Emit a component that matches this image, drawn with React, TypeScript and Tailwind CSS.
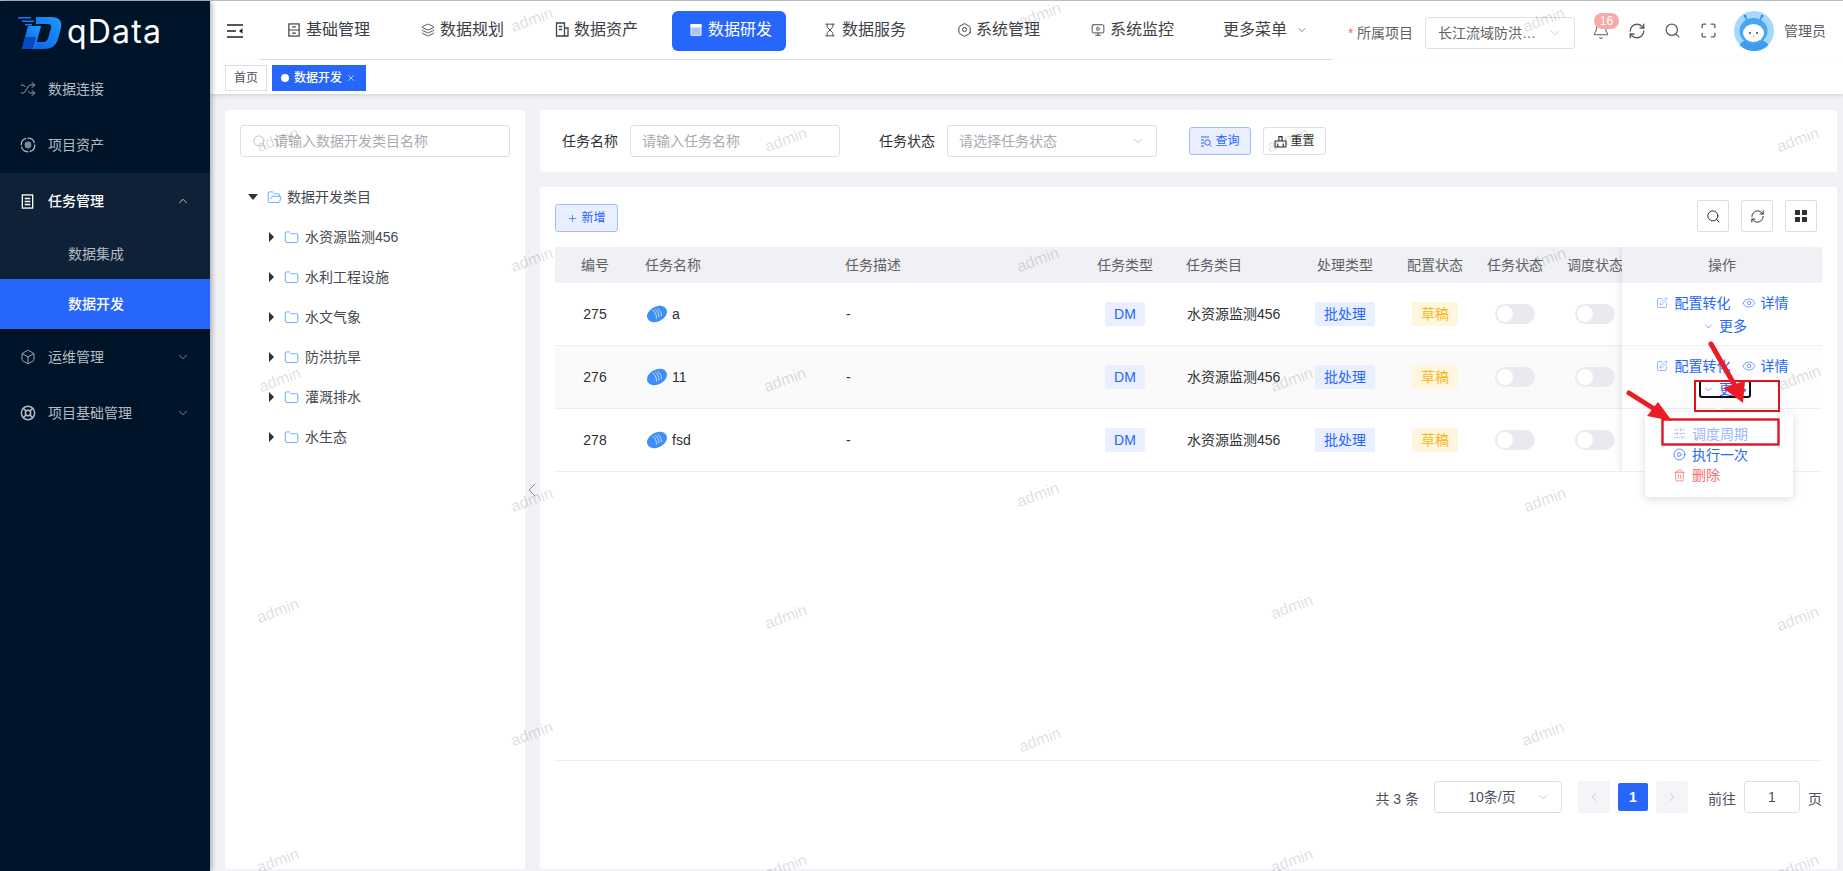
import {
  Bell,
  Box,
  ChevronDown,
  ChevronLeft,
  ChevronRight,
  ChevronUp,
  CirclePlay,
  Eye,
  Folder,
  FolderOpen,
  Hexagon,
  Hourglass,
  Layers,
  LifeBuoy,
  Maximize,
  MonitorPlay,
  Plus,
  RefreshCw,
  Search,
  Shuffle,
  SlidersHorizontal,
  SquarePen,
  Trash2,
  X,
} from 'lucide-react';
import type { ReactNode } from 'react';

const FONT = "font-['Liberation_Sans','Noto_Sans_CJK_SC',sans-serif]";

const WATERMARKS = [
  [532, 20], [1040, 15], [1544, 20],
  [278, 140], [786, 140], [1288, 140], [1798, 140],
  [532, 260], [1038, 260], [1545, 260],
  [280, 380], [785, 380], [1292, 380], [1800, 378],
  [532, 500], [1038, 495], [1545, 500],
  [278, 611], [786, 617], [1292, 607], [1798, 619],
  [532, 734], [1040, 740], [1543, 734],
  [278, 861], [786, 867], [1292, 861], [1798, 867],
];

function BaseIcon() {
  return (
    <svg className="size-[14px]" viewBox="0 0 13 15" fill="none" stroke="currentColor" strokeWidth="1.3">
      <rect x="1" y="1" width="11" height="13" />
      <path d="M1 7.5h11M4.5 4.2h4M4.5 10.8h4" />
    </svg>
  );
}

function AssetIcon() {
  return (
    <svg className="size-[15px]" viewBox="0 0 14 15" fill="none" stroke="currentColor" strokeWidth="1.3">
      <path d="M1.5 1h8v13h-8zM9.500 6H13v8H1.500M3.800 4.500h3.400M3.800 7.500h3.400" />
    </svg>
  );
}

function DevIcon() {
  return (
    <svg className="size-[14px]" viewBox="0 0 13 15" fill="none">
      <rect x="0.5" y="1" width="12" height="13" rx="1.5" fill="#fff" fillOpacity="0.8" />
      <rect x="0.5" y="1" width="12" height="3.2" rx="1" fill="#fff" />
      <rect x="2" y="5.5" width="9" height="7" fill="#2666fb" fillOpacity="0.25" />
    </svg>
  );
}

function HexIcon() {
  return (
    <span className="relative flex size-[15px] items-center justify-center">
      <Hexagon className="size-[16px]" strokeWidth={1.6} />
      <span className="absolute size-[5px] rounded-full border border-current" />
    </span>
  );
}

function MenuFoldIcon() {
  return (
    <svg className="size-[16px]" viewBox="0 0 16 14" fill="none" stroke="#222" strokeWidth="1.6">
      <path d="M0 1h16M0 7h9M0 13h16" />
      <path d="M15.500 4.200 12 7l3.500 2.800z" fill="#222" stroke="none" />
    </svg>
  );
}

function ListDocIcon() {
  return (
    <svg className="size-[15px]" viewBox="0 0 14 16" fill="none" stroke="currentColor" strokeWidth="1.4">
      <rect x="1.5" y="1" width="11" height="14" />
      <path d="M4 4.800h6M4 8h6M4 11.200h6" />
    </svg>
  );
}

function AssetRingIcon() {
  return (
    <svg className="size-[16px]" viewBox="0 0 16 16" fill="none" stroke="currentColor">
      <circle cx="8" cy="8" r="6.800" strokeWidth="1.2" strokeDasharray="9 1.5" />
      <circle cx="8" cy="8" r="3.400" fill="currentColor" fillOpacity="0.7" stroke="none" />
    </svg>
  );
}

function QueryIcon() {
  return (
    <svg className="size-[12px]" viewBox="0 0 12 12" fill="none" stroke="currentColor" strokeWidth="1">
      <path d="M1 2h8M1 5h3M1 8h3M1 11h3" />
      <circle cx="7.500" cy="7.500" r="2.700" />
      <path d="m9.500 9.500 2 2" />
    </svg>
  );
}

function Logo() {
  return (
    <svg width="45" height="34" viewBox="0 0 45 34">
      <defs>
        <linearGradient id="logoA" x1="0" y1="1" x2="1" y2="0">
          <stop offset="0" stopColor="#0b5fe8" />
          <stop offset="1" stopColor="#1e9bff" />
        </linearGradient>
      </defs>
      <path d="M1 1h13v1.500H1zM5 4.500h12V6H5zM8 8h7v1.500H8z" fill="#1677ff" />
      <path d="M19 1h15c8 0 11.500 4 10 11l-3 11c-2 7-7 10-14 10H12l3.500-7h10c3 0 5-1 6-5l2.500-9c.7-3-.5-4-3.500-4H19z" fill="url(#logoA)" />
      <path d="M11 10h13l-6 23H5z" fill="url(#logoA)" />
      <path d="M8 21h11l-3 12H5z" fill="#0b49c4" />
    </svg>
  );
}

function Avatar() {
  return (
    <svg className="size-10" viewBox="0 0 40 40">
      <defs>
        <clipPath id="avClip">
          <circle cx="20" cy="20" r="20" />
        </clipPath>
      </defs>
      <g clipPath="url(#avClip)">
        <rect width="40" height="40" fill="#a5d8ff" />
        <path d="M4 40c0-8 6-12 16-12s16 4 16 12z" fill="#3d9bf0" />
        <path d="M13 9 11 5M26 9l2-4" stroke="#2e8ae6" strokeWidth="1.5" />
        <circle cx="11" cy="5" r="1.300" fill="#2e8ae6" />
        <circle cx="28" cy="5" r="1.300" fill="#2e8ae6" />
        <ellipse cx="19.500" cy="20" rx="14" ry="13" fill="#4aa5f5" />
        <ellipse cx="19.500" cy="22" rx="10.500" ry="9" fill="#fff" />
        <circle cx="16" cy="22" r="1" fill="#345" />
        <circle cx="23" cy="22" r="1" fill="#345" />
        <path d="M19 25h1.500" stroke="#e88" strokeWidth="1" />
      </g>
    </svg>
  );
}

function TaskIcon() {
  return (
    <svg width="20" height="18" viewBox="0 0 20 18">
      <ellipse cx="10" cy="9" rx="10.500" ry="7.500" transform="rotate(-28 10 9)" fill="#3d8ef5" />
      <path d="M5.500 5c2.500 1.500 4 4 4 8.500M8 3.800c2.500 2 4 4.500 4 8.500M10.500 3c2.500 2 4 4.500 4 8" stroke="#cfe3ff" strokeWidth="0.9" fill="none" />
    </svg>
  );
}

function TopNavItem({ icon, label, active = false }: { icon: ReactNode; label: string; active?: boolean }) {
  return (
    <div
      className={`flex h-10 w-[114px] items-center gap-[5px] rounded-md pb-[3px] pl-[17px] text-base ${
        active ? 'bg-[#2666fb] text-white' : 'text-[#3d4148]'
      }`}
    >
      <span className="flex w-[14px] justify-center">{icon}</span>
      <span className="whitespace-nowrap leading-none">{label}</span>
    </div>
  );
}

function SideItem({ icon, label, chevron, open = false }: { icon: ReactNode; label: string; chevron?: 'up' | 'down'; open?: boolean }) {
  return (
    <div className={`flex h-14 items-center pl-[20px] pr-[20px] text-sm ${open ? 'font-medium text-white' : 'text-[#b4bac2]'}`}>
      <span className="flex w-[28px] items-center">{icon}</span>
      <span className="flex-1">{label}</span>
      {chevron === 'up' && <ChevronUp className="size-[14px]" strokeWidth={1.2} />}
      {chevron === 'down' && <ChevronDown className="size-[14px]" strokeWidth={1.2} />}
    </div>
  );
}

function Sidebar() {
  return (
    <aside className="z-20 flex w-[210px] shrink-0 flex-col bg-[#001429] shadow-[2px_0_5px_rgba(0,20,41,0.3)]">
      <div className="flex h-[60px] items-start pl-[17px] pt-[15px]">
        <Logo />
        <span className="-mt-px ml-[5px] font-['Inter',sans-serif] text-[32px] font-normal leading-[34px] tracking-[1.2px] text-white">qData</span>
      </div>
      <SideItem icon={<Shuffle className="size-[16px]" strokeWidth={1.3} />} label="数据连接" />
      <SideItem icon={<AssetRingIcon />} label="项目资产" />
      <div className="bg-[#0f2136]">
        <SideItem icon={<ListDocIcon />} label="任务管理" chevron="up" open />
        <div className="flex h-[50px] items-center pl-[68px] text-sm text-[#b4bac2]">数据集成</div>
        <div className="flex h-[50px] items-center bg-[#2666fb] pl-[68px] text-sm font-medium text-white">数据开发</div>
      </div>
      <SideItem icon={<Box className="size-[16px]" strokeWidth={1.3} />} label="运维管理" chevron="down" />
      <SideItem icon={<LifeBuoy className="size-[16px]" strokeWidth={2.2} />} label="项目基础管理" chevron="down" />
    </aside>
  );
}

function Header() {
  return (
    <header className="flex h-[59px] shrink-0 items-center bg-white">
      <div className="ml-[17px] flex w-[33px] items-center">
        <MenuFoldIcon />
      </div>
      <nav className="flex h-full w-[1072px] items-center gap-5 border-b border-[#e1e3ea] pl-[10px] pt-[2px]">
        <TopNavItem icon={<BaseIcon />} label="基础管理" />
        <TopNavItem icon={<Layers className="size-[16px]" strokeWidth={1.5} />} label="数据规划" />
        <TopNavItem icon={<AssetIcon />} label="数据资产" />
        <TopNavItem icon={<DevIcon />} label="数据研发" active />
        <TopNavItem icon={<Hourglass className="size-[16px]" strokeWidth={1.6} />} label="数据服务" />
        <TopNavItem icon={<HexIcon />} label="系统管理" />
        <TopNavItem icon={<MonitorPlay className="size-[16px]" strokeWidth={1.6} />} label="系统监控" />
        <div className="flex items-center gap-[9px] pb-[3px] pl-[15px] text-base whitespace-nowrap text-[#3d4148]">
          更多菜单
          <ChevronDown className="size-[12px]" strokeWidth={1.3} />
        </div>
      </nav>
      <div className="flex items-center pt-[5px] text-sm text-[#606266]">
        <span className="ml-[16px] w-[9px] text-[#f56c6c]">*</span>
        <span className="w-[68px]">所属项目</span>
        <div className="flex h-8 w-[150px] items-center justify-between rounded-[3px] border border-[#dcdfe6] pl-3 pr-3 text-[#606266]">
          <span className="whitespace-nowrap">长江流域防洪…</span>
          <ChevronDown className="size-[14px] text-[#b0b3ba]" strokeWidth={1.2} />
        </div>
      </div>
      <div className="ml-[17px] flex items-center text-[#5a5e66]">
        <span className="relative mr-[18px] flex">
          <Bell className="size-[18px]" strokeWidth={1.4} />
          <span className="absolute -top-[9px] left-[2px] flex h-4 w-[25px] items-center justify-center rounded-full bg-[#f9a8a8] text-xs font-medium text-white">16</span>
        </span>
        <RefreshCw className="mr-[18px] size-[18px]" strokeWidth={1.8} />
        <Search className="mr-[19px] size-[17px]" strokeWidth={1.8} />
        <Maximize className="mr-[17px] size-[17px]" strokeWidth={1.9} />
        <Avatar />
        <span className="ml-[10px] text-sm whitespace-nowrap">管理员</span>
      </div>
    </header>
  );
}

function TabBar() {
  return (
    <div className="z-10 flex h-[34px] shrink-0 items-start gap-[5px] bg-white pl-[15px] pt-[5px] shadow-[0_2px_4px_rgba(0,21,41,0.12)]">
      <div className="flex h-[26px] w-[42px] items-center justify-center border border-[#dcdfe6] text-xs text-[#495060]">首页</div>
      <div className="flex h-[26px] w-[94px] items-center bg-[#2666fb] pl-[9px] text-xs font-medium text-white">
        <span className="mr-[5px] size-2 rounded-full bg-white" />
        数据开发
        <X className="ml-[4px] size-[10px]" strokeWidth={1.5} />
      </div>
    </div>
  );
}

function TreeRow({ label, open = false }: { label: string; open?: boolean }) {
  return (
    <div className={`flex h-10 items-center text-sm text-[#454a52] ${open ? 'pl-[8px]' : 'pl-[29px]'}`}>
      <span
        className={
          open
            ? 'mr-[9px] h-0 w-0 border-x-[5px] border-t-[6px] border-x-transparent border-t-[#303133]'
            : 'mr-[10px] h-0 w-0 border-y-[5px] border-l-[5px] border-y-transparent border-l-[#303133]'
        }
      />
      {open ? (
        <FolderOpen className="mr-[5px] size-[15px] text-[#409eff]" strokeWidth={1.3} />
      ) : (
        <Folder className="mr-[6px] size-[15px] text-[#409eff]" strokeWidth={1.3} />
      )}
      {label}
    </div>
  );
}

function TreePanel() {
  return (
    <section className="relative w-[300px] shrink-0 rounded-[3px] bg-white px-[15px] pt-[15px]">
      <div className="flex h-8 items-center rounded-[3px] border border-[#dcdfe6] pl-[11px] text-sm text-[#a8abb2]">
        <Search className="mr-[7px] size-[15px] text-[#b0b3ba]" strokeWidth={1.2} />
        请输入数据开发类目名称
      </div>
      <div className="mt-5">
        <TreeRow label="数据开发类目" open />
        {['水资源监测456', '水利工程设施', '水文气象', '防洪抗旱', '灌溉排水', '水生态'].map((t) => (
          <TreeRow key={t} label={t} />
        ))}
      </div>
      <ChevronLeft className="absolute -right-[19px] top-[368px] size-6 text-[#8a8d93]" strokeWidth={1} />
    </section>
  );
}

function FilterPanel() {
  return (
    <section className="flex h-[62px] shrink-0 items-center rounded-[3px] bg-white pl-[22px] text-sm text-[#303133]">
      <span className="w-[68px]">任务名称</span>
      <div className="flex h-8 w-[210px] items-center rounded-[3px] border border-[#dcdfe6] pl-[11px] text-[#a8abb2]">请输入任务名称</div>
      <span className="ml-[39px] w-[68px]">任务状态</span>
      <div className="flex h-8 w-[210px] items-center justify-between rounded-[3px] border border-[#dcdfe6] pl-[11px] pr-[11px] text-[#a8abb2]">
        请选择任务状态
        <ChevronDown className="size-[14px]" strokeWidth={1.2} />
      </div>
      <button className="ml-[32px] flex h-7 w-[62px] items-center justify-center gap-[3px] rounded-[3px] border border-[#a3bdfd] bg-[#e9effe] text-xs text-[#2666fb]">
        <QueryIcon />
        查询
      </button>
      <button className="ml-3 flex h-7 w-[63px] items-center justify-center gap-[3px] rounded-[3px] border border-[#dcdfe6] text-xs text-[#303133]">
        <svg className="size-[13px]" viewBox="0 0 12 12" fill="none" stroke="currentColor" strokeWidth="1">
          <path d="M4.500 5V1.500h3V5M1 5.500h10V11H1zM3.500 8v3M8.500 8v3" />
        </svg>
        重置
      </button>
    </section>
  );
}

const COLS = 'grid grid-cols-[80px_200px_240px_100px_125px_90px_90px_70px_90px]';

const ROWS = [
  { id: '275', name: 'a' },
  { id: '276', name: '11' },
  { id: '278', name: 'fsd' },
];

function Badge({ children, tone }: { children: ReactNode; tone: 'blue' | 'amber' }) {
  return (
    <span
      className={`flex h-6 items-center justify-center rounded-[2px] px-[9px] text-sm ${
        tone === 'blue' ? 'bg-[#e9effe] text-[#2666fb]' : 'bg-[#fff6e0] text-[#fdb71c]'
      }`}
    >
      {children}
    </span>
  );
}

function Toggle() {
  return (
    <span className="flex h-5 w-10 items-center rounded-full bg-[#e8eaef] pl-[2px]">
      <span className="size-4 rounded-full bg-white" />
    </span>
  );
}

function ActionCell({ focused = false }: { focused?: boolean }) {
  return (
    <div className={`flex h-[63px] flex-col items-center border-b border-[#ebeef5] pt-[9px] text-sm text-[#2666fb] ${focused ? 'bg-[#fdfdfd]' : ''}`}>
      <div className="flex h-[22px] items-center">
        <SquarePen className="mr-[7px] size-[12px] text-[#7b9ffb]" strokeWidth={1.5} />
        配置转化
        <Eye className="ml-[11px] mr-[5px] size-[14px] text-[#5d8bfb]" strokeWidth={1.4} />
        详情
      </div>
      <div className="flex h-6 items-center pl-[6px]">
        <div className={`flex h-[18px] items-center rounded-[3px] border-2 px-[2px] ${focused ? 'border-[#111]' : 'border-transparent'}`}>
          <ChevronDown className="mr-[5px] size-[11px]" strokeWidth={1.3} />
          更多
        </div>
      </div>
    </div>
  );
}

function DataTable() {
  return (
    <div className="relative mt-[15px] overflow-hidden text-sm">
      <div className={`${COLS} h-9 items-center bg-[#f0f0f5] text-[#606266]`}>
        <span className="text-center">编号</span>
        <span className="pl-[10px]">任务名称</span>
        <span className="pl-[10px]">任务描述</span>
        <span className="text-center">任务类型</span>
        <span className="pl-[11px]">任务类目</span>
        <span className="text-center">处理类型</span>
        <span className="text-center">配置状态</span>
        <span className="text-center whitespace-nowrap">任务状态</span>
        <span className="text-center">调度状态</span>
      </div>
      {ROWS.map((r, i) => (
        <div key={r.id} className={`${COLS} h-[63px] items-center border-b border-[#ebeef5] text-[#303133] ${i === 1 ? 'bg-[#fafafa]' : ''}`}>
          <span className="text-center">{r.id}</span>
          <span className="flex items-center gap-[5px] pl-[12px]">
            <TaskIcon />
            {r.name}
          </span>
          <span className="pl-[11px]">-</span>
          <span className="flex justify-center">
            <Badge tone="blue">DM</Badge>
          </span>
          <span className="pl-[12px]">水资源监测456</span>
          <span className="flex justify-center">
            <Badge tone="blue">批处理</Badge>
          </span>
          <span className="flex justify-center">
            <Badge tone="amber">草稿</Badge>
          </span>
          <span className="flex justify-center">
            <Toggle />
          </span>
          <span className="flex justify-center">
            <Toggle />
          </span>
        </div>
      ))}
      <div className="absolute right-0 top-0 w-[200px] bg-white shadow-[-3px_0_6px_rgba(0,0,0,0.07)]">
        <div className="flex h-9 items-center justify-center bg-[#f0f0f5] text-[#606266]">操作</div>
        <ActionCell />
        <ActionCell focused />
        <div className="h-[63px] border-b border-[#ebeef5]" />
      </div>
    </div>
  );
}

function Pagination() {
  return (
    <div className="flex h-[109px] shrink-0 items-start justify-end border-t border-[#ebeef5] pt-5 text-sm text-[#495060]">
      <span className="mr-[15px] mt-[8px] whitespace-nowrap">共 3 条</span>
      <div className="relative flex h-8 w-[128px] items-center justify-center rounded-[3px] border border-[#dcdfe6] pr-[12px]">
        10条/页
        <ChevronDown className="absolute right-[11px] size-[14px] text-[#b0b3ba]" strokeWidth={1.2} />
      </div>
      <div className="ml-4 flex h-8 w-8 items-center justify-center rounded-[2px] bg-[#f4f5f9] text-[#b0b3ba]">
        <ChevronLeft className="size-[14px]" strokeWidth={1.2} />
      </div>
      <div className="mx-2 mt-[2px] flex h-7 w-[30px] items-center justify-center rounded-[2px] bg-[#2666fb] font-bold text-white">1</div>
      <div className="flex h-8 w-8 items-center justify-center rounded-[2px] bg-[#f4f5f9] text-[#b0b3ba]">
        <ChevronRight className="size-[14px]" strokeWidth={1.2} />
      </div>
      <span className="ml-5 mr-2 mt-[8px]">前往</span>
      <div className="flex h-8 w-14 items-center justify-center rounded-[3px] border border-[#dcdfe6]">1</div>
      <span className="ml-[8px] mt-[8px]">页</span>
    </div>
  );
}

function TablePanel() {
  return (
    <section className="mt-[15px] flex min-h-0 flex-1 flex-col rounded-[3px] bg-white px-[15px] pt-[13px]">
      <div className="flex h-8 shrink-0 items-end justify-between pr-[5px]">
        <button className="flex h-7 w-[63px] items-center justify-center gap-[3px] rounded-[3px] border border-[#a3bdfd] bg-[#e9effe] text-xs text-[#2666fb]">
          <Plus className="size-[11px]" strokeWidth={1.5} />
          新增
        </button>
        <div className="flex gap-3 text-[#303133]">
          <span className="flex size-8 items-center justify-center rounded-[2px] border border-[#dcdfe6]">
            <Search className="size-[15px]" strokeWidth={1.6} />
          </span>
          <span className="flex size-8 items-center justify-center rounded-[2px] border border-[#dcdfe6]">
            <RefreshCw className="size-[15px]" strokeWidth={1.6} />
          </span>
          <span className="flex size-8 items-center justify-center rounded-[2px] border border-[#dcdfe6]">
            <span className="grid grid-cols-2 gap-[2px]">
              <span className="size-[5px] bg-[#303133]" />
              <span className="size-[5px] bg-[#303133]" />
              <span className="size-[5px] bg-[#303133]" />
              <span className="size-[5px] bg-[#303133]" />
            </span>
          </span>
        </div>
      </div>
      <DataTable />
      <div className="flex-1" />
      <Pagination />
    </section>
  );
}

function MoreMenu() {
  return (
    <div className="absolute left-[1645px] top-[412px] z-30 flex h-[85px] w-[148px] flex-col rounded-[4px] bg-white pl-[28px] pt-[11px] text-sm shadow-[0_2px_10px_rgba(0,0,0,0.14)]">
      <span className="absolute -top-[4px] left-[70px] size-2 rotate-45 bg-white" />
      <div className="flex h-[21px] items-center text-[#9db6fc]">
        <SlidersHorizontal className="mr-[6px] size-[13px]" strokeWidth={1.4} />
        调度周期
      </div>
      <div className="flex h-[21px] items-center text-[#2666fb]">
        <CirclePlay className="mr-[6px] size-[13px]" strokeWidth={1.4} />
        执行一次
      </div>
      <div className="flex h-[20px] items-center text-[#f56c6c]">
        <Trash2 className="mr-[6px] size-[13px]" strokeWidth={1.4} />
        删除
      </div>
    </div>
  );
}

function Annotations() {
  return (
    <svg className="pointer-events-none absolute left-0 top-0 z-40 h-[871px] w-[1843px]" viewBox="0 0 1843 871" fill="none">
      <rect x="1695" y="381" width="84" height="30" stroke="#e3131e" strokeWidth="2" />
      <rect x="1662.500" y="419.500" width="116" height="25" stroke="#e3131e" strokeWidth="2.400" />
      <path d="M1711 344 1734 384" stroke="#eb1c26" strokeWidth="5" strokeLinecap="round" />
      <path d="M1743 403 1723 388 1745 381z" fill="#eb1c26" />
      <path d="M1629 393 1656 410" stroke="#eb1c26" strokeWidth="5" strokeLinecap="round" />
      <path d="M1672 421 1647 416 1658 402z" fill="#eb1c26" />
    </svg>
  );
}

export default function App() {
  return (
    <div className={`${FONT} relative flex h-[871px] w-[1843px] flex-col overflow-hidden bg-[#f0f2f5]`}>
      <div className="h-px shrink-0 bg-[#bdbdbd]" />
      <div className="flex min-h-0 flex-1">
        <Sidebar />
        <main className="flex min-w-0 flex-1 flex-col">
          <Header />
          <TabBar />
          <div className="flex min-h-0 flex-1 gap-[15px] pb-[2px] pl-[15px] pr-[6px] pt-[16px]">
            <TreePanel />
            <div className="flex min-w-0 flex-1 flex-col">
              <FilterPanel />
              <TablePanel />
            </div>
          </div>
        </main>
      </div>
      <MoreMenu />
      <Annotations />
      <div className="pointer-events-none absolute left-0 top-0 z-10 h-full w-full">
        {WATERMARKS.map(([x, y]) => (
          <span
            key={`${x}-${y}`}
            className="absolute -translate-x-1/2 -translate-y-1/2 -rotate-[20deg] text-base text-black/15"
            style={{ left: x, top: y }}
          >
            admin
          </span>
        ))}
      </div>
    </div>
  );
}
